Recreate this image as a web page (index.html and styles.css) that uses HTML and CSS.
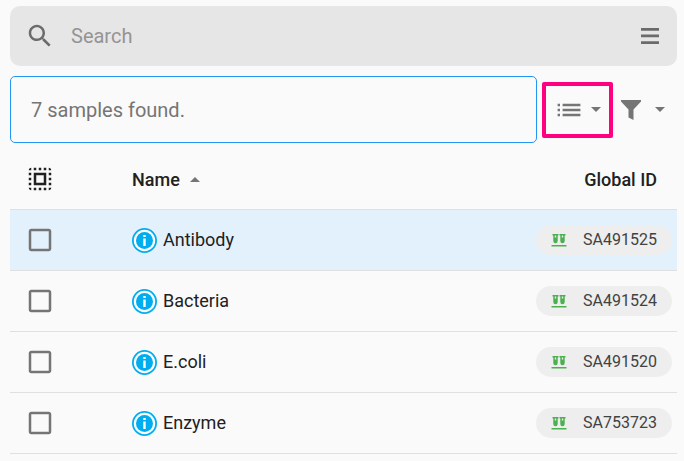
FILE: index.html
```html
<!DOCTYPE html>
<html lang="en">
<head>
  <meta charset="UTF-8" />
  <meta name="viewport" content="width=device-width, initial-scale=1" />
  <title>Samples</title>
  <link rel="stylesheet" href="styles.css">
</head>
<body>

  <!-- Shared icons -->
  <svg class="sprite" aria-hidden="true">
    <symbol id="icon-box" viewBox="0 0 24 24">
      <path d="M19 5v14H5V5h14m0-2H5c-1.100 0-2 .9-2 2v14c0 1.100.9 2 2 2h14c1.100 0 2-.9 2-2V5c0-1.100-.9-2-2-2z"/>
    </symbol>
    <symbol id="icon-info" viewBox="0 0 25 25">
      <circle cx="12.500" cy="12.500" r="11.600" fill="#fff" stroke="#00aeef" stroke-width="1.800"/>
      <circle cx="12.500" cy="12.500" r="8.500" fill="#00aeef"/>
      <path d="M11.300 7h2.400v2h-2.400zM11.300 10.500h2.400v7.500h-2.400z" fill="#fff"/>
    </symbol>
    <symbol id="icon-tubes" viewBox="0 0 16 14">
      <path d="M1.500 1h6v1.500h-.8v5.500a2.200 2.200 0 0 1-4.400 0V2.500h-.8zM8.500 1h6v1.500h-.8v5.500a2.200 2.200 0 0 1-4.400 0V2.500h-.8zM.5 12h15v1.500H.5z"/>
      <path d="M3.800 2.500h1.400v2H3.800zM10.800 2.500h1.400v2h-1.400z" fill="#eee"/>
    </symbol>
    <symbol id="icon-down" viewBox="0 0 10 5">
      <path d="M0 0h10L5 5z"/>
    </symbol>
  </svg>

  <div class="search">
    <svg class="search-icon" viewBox="0 0 24 24"><path d="M15.500 14h-.79l-.28-.27C15.410 12.590 16 11.110 16 9.500 16 5.910 13.090 3 9.500 3S3 5.910 3 9.500 5.910 16 9.500 16c1.610 0 3.090-.59 4.230-1.570l.27.28v.79l5 4.990L20.490 19l-4.990-5zm-6 0C7.010 14 5 11.990 5 9.500S7.010 5 9.500 5 14 7.010 14 9.500 11.990 14 9.500 14z"/></svg>
    <input type="text" placeholder="Search" aria-label="Search">
    <button class="menu" aria-label="Menu">
      <svg viewBox="0 0 18 16"><path d="M0 0h18v2.700H0zM0 6.600h18v2.700H0zM0 13.200h18v2.700H0z"/></svg>
    </button>
  </div>

  <div class="toolbar">
    <div class="status">7 samples found.</div>
    <button class="view highlight" aria-label="Change view">
      <svg class="list-icon" viewBox="0 0 24 14"><path d="M.6.800h2.400v2.400H.6zM5.600.800h17.800v2.400H5.600zM.6 5.800h2.400v2.400H.6zM5.600 5.800h17.800v2.400H5.600zM.6 10.800h2.400v2.400H.6zM5.600 10.800h17.800v2.400H5.600z"/></svg>
      <svg class="caret"><use href="#icon-down"/></svg>
    </button>
    <button class="filter" aria-label="Filter">
      <svg class="filter-icon" viewBox="0 0 20 20"><path d="M0 0h20v1.500l-7.500 8V20L7.500 17.500v-8L0 1.500z"/></svg>
      <svg class="caret"><use href="#icon-down"/></svg>
    </button>
  </div>

  <table class="samples">
    <thead>
      <tr>
        <th class="col-check">
          <button class="select-all" aria-label="Select all">
            <svg viewBox="0 0 24 24"><path d="M3 5h2V3c-1.100 0-2 .9-2 2zm0 8h2v-2H3v2zm4 8h2v-2H7v2zM3 9h2V7H3v2zm10-6h-2v2h2V3zm6 0v2h2c0-1.100-.9-2-2-2zM5 21v-2H3c0 1.100.9 2 2 2zm-2-4h2v-2H3v2zM9 3H7v2h2V3zm2 18h2v-2h-2v2zm8-8h2v-2h-2v2zm0 8c1.100 0 2-.9 2-2h-2v2zm0-12h2V7h-2v2zm0 8h2v-2h-2v2zm-4 4h2v-2h-2v2zm0-16h2V3h-2v2zM7 17h10V7H7v10zm2-8h6v6H9V9z"/></svg>
          </button>
        </th>
        <th class="col-name"><button class="sort">Name <svg viewBox="0 0 10 5"><path d="M0 5h10L5 0z"/></svg></button></th>
        <th class="col-id">Global ID</th>
      </tr>
    </thead>
    <tbody>
      <tr class="active">
        <td><label class="check"><input type="checkbox" aria-label="Select Antibody"><svg><use href="#icon-box"/></svg></label></td>
        <td><div class="name"><svg><use href="#icon-info"/></svg>Antibody</div></td>
        <td class="col-id"><a class="chip" href="#SA491525"><svg><use href="#icon-tubes"/></svg>SA491525</a></td>
      </tr>
      <tr>
        <td><label class="check"><input type="checkbox" aria-label="Select Bacteria"><svg><use href="#icon-box"/></svg></label></td>
        <td><div class="name"><svg><use href="#icon-info"/></svg>Bacteria</div></td>
        <td class="col-id"><a class="chip" href="#SA491524"><svg><use href="#icon-tubes"/></svg>SA491524</a></td>
      </tr>
      <tr>
        <td><label class="check"><input type="checkbox" aria-label="Select E.coli"><svg><use href="#icon-box"/></svg></label></td>
        <td><div class="name"><svg><use href="#icon-info"/></svg>E.coli</div></td>
        <td class="col-id"><a class="chip" href="#SA491520"><svg><use href="#icon-tubes"/></svg>SA491520</a></td>
      </tr>
      <tr>
        <td><label class="check"><input type="checkbox" aria-label="Select Enzyme"><svg><use href="#icon-box"/></svg></label></td>
        <td><div class="name"><svg><use href="#icon-info"/></svg>Enzyme</div></td>
        <td class="col-id"><a class="chip" href="#SA753723"><svg><use href="#icon-tubes"/></svg>SA753723</a></td>
      </tr>
    </tbody>
  </table>

</body>
</html>
```
FILE: styles.css
```css
* {
  box-sizing: border-box;
}

body {
  margin: 0;
  padding: 6px 7px 0 10px;
  background: #fafafa;
  color: #212121;
  font-family: Roboto, sans-serif;
  font-size: 18px;
}

svg {
  display: block;
  flex: none;
  fill: currentColor;
}

.sprite {
  position: absolute;
  width: 0;
  height: 0;
}

button {
  display: flex;
  align-items: center;
  padding: 0;
  border: 0;
  background: none;
  color: #757575;
  font: inherit;
  cursor: pointer;
}

/* Search bar */
.search {
  display: flex;
  align-items: center;
  height: 60px;
  padding: 0 18px 0 15px;
  border-radius: 10px;
  background: #e6e6e6;
}

.search-icon {
  width: 30px;
  height: 30px;
  color: #6b6b6b;
}

.search input {
  flex: 1;
  min-width: 0;
  padding: 0 16px;
  border: 0;
  outline: 0;
  background: none;
  color: #212121;
  font: inherit;
  font-size: 20px;
}

.search input::placeholder {
  color: #949494;
  opacity: 1;
}

.menu {
  color: #6b6b6b;
}

.menu svg {
  width: 18px;
  height: 16px;
}

/* Status and view controls */
.toolbar {
  display: flex;
  align-items: center;
  margin-top: 10px;
}

.status {
  flex: 1;
  padding: 21px 20px 20px;
  border: 1px solid #2196f3;
  border-radius: 5px;
  color: #757575;
  font-size: 20px;
  line-height: 24px;
}

.view {
  gap: 10px;
  height: 56px;
  margin-left: 5px;
  padding: 0 8px 0 11px;
}

.highlight {
  border: 4px solid #ff0080;
  border-radius: 2px;
}

.filter {
  gap: 14px;
  padding: 0 12px 0 8px;
}

.list-icon {
  width: 24px;
  height: 14px;
}

.filter-icon {
  width: 20px;
  height: 20px;
}

.caret {
  width: 10px;
  height: 5px;
}

/* Table */
.samples {
  width: 100%;
  margin-top: 6px;
  border-collapse: separate;
  border-spacing: 0;
  table-layout: fixed;
}

.samples th,
.samples td {
  height: 61px;
  padding: 0;
  border-bottom: 1px solid #e0e0e0;
  text-align: left;
}

.samples th {
  font-weight: 500;
}

.samples .active td {
  background: #e3f1fd;
}

.samples .col-check {
  width: 122px;
}

.samples .col-id {
  width: 200px;
  padding-right: 5px;
  text-align: right;
}

.samples th.col-id {
  padding-right: 20px;
}

.select-all {
  margin-left: 15px;
  color: #212121;
}

.select-all svg {
  width: 30px;
  height: 30px;
}

.sort {
  gap: 10px;
  color: #212121;
}

.sort svg {
  width: 10px;
  height: 5px;
  color: #757575;
}

.check {
  display: block;
  position: relative;
  width: 30px;
  height: 30px;
  margin-left: 15px;
  color: #757575;
}

.check input {
  position: absolute;
  inset: 0;
  width: 100%;
  height: 100%;
  margin: 0;
  opacity: 0;
  cursor: pointer;
}

.check svg {
  width: 30px;
  height: 30px;
}

.name {
  display: flex;
  align-items: center;
  gap: 6px;
  line-height: 20px;
}

.name svg {
  width: 25px;
  height: 25px;
}

.chip {
  display: inline-flex;
  align-items: center;
  gap: 16px;
  height: 30px;
  padding: 0 15px;
  border-radius: 15px;
  background: #eee;
  color: #424242;
  font-size: 16px;
  line-height: 18px;
  text-decoration: none;
  vertical-align: middle;
}

.chip svg {
  width: 16px;
  height: 14px;
  color: #4caf50;
}
```
